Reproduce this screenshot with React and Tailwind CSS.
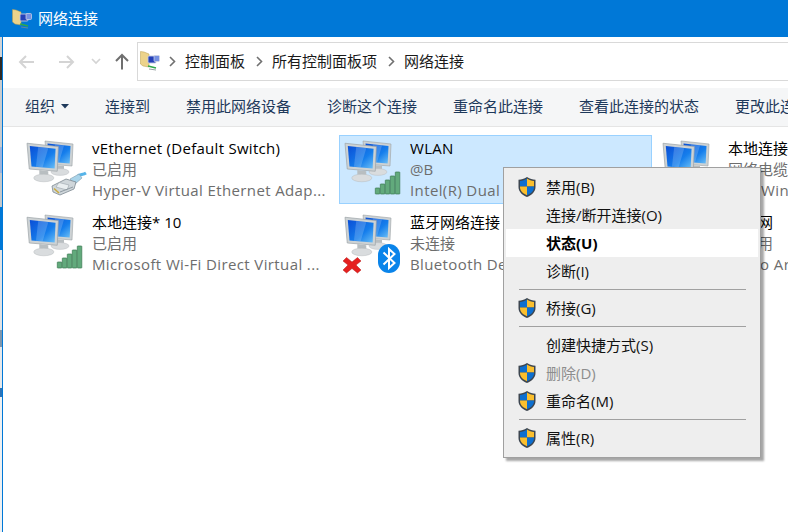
import React from "react";

const font = { fontFamily: '"Open Sans", "Noto Sans CJK SC", sans-serif' };

function Mon({ x, y, s = 1, id }) {
  return (
    <g transform={`translate(${x} ${y}) scale(${s})`}>
      <path d="M0 2 L28 5 L27 27 L2 25 Z" fill="#cdd2d4" stroke="#9aa1a5" strokeWidth="0.6" />
      <path d="M2.5 4.5 L25.5 7 L24.7 24.5 L4 22.8 Z" fill={`url(#${id})`} />
      <path d="M10 5.4 L19 6.4 L14 23.4 L8 23 Z" fill="#ffffff" opacity="0.18" />
      <path d="M11 26 L19 27 L19 31 L11 30 Z" fill="#b8bec1" />
      <ellipse cx="15" cy="33" rx="9" ry="3.4" fill="#d9dcde" stroke="#b2b7ba" strokeWidth="0.4" />
    </g>
  );
}

function Monitors({ id }) {
  return (
    <>
      <defs>
        <linearGradient id={id} x1="0" y1="0" x2="1" y2="1">
          <stop offset="0" stopColor="#0a4ed6" />
          <stop offset="0.6" stopColor="#157eec" />
          <stop offset="1" stopColor="#6cbff6" />
        </linearGradient>
      </defs>
      <Mon x={19} y={0} s={1} id={id} />
      <Mon x={1} y={2} s={1.12} id={id} />
    </>
  );
}

function Signal() {
  const bars = [[31, 6], [36, 10], [41, 14], [46, 18], [51, 22]];
  return (
    <g>
      {bars.map(([bx, h]) => (
        <rect key={bx} x={bx + 0.3} y={55 - h} width="4.5" height={h} rx="0.5" fill="#62aa7c" stroke="#3b7a52" strokeWidth="0.7" />
      ))}
    </g>
  );
}

function Plug() {
  return (
    <g>
      <path d="M52 37 C54 35 57 36 60 34" stroke="#56b4e9" strokeWidth="3" fill="none" />
      <path d="M44 40 L53 35 L56 39 L49 45 Z" fill="#a9d4ea" stroke="#7f9aab" strokeWidth="0.6" />
      <path d="M26 47 L40 40 L50 43 L48 50 L34 56 L27 53 Z" fill="#cfd6da" stroke="#7c8891" strokeWidth="0.8" />
      <path d="M33 43.5 L43 46 L41 51 L30 48 Z" fill="#e9eef0" stroke="#8c979f" strokeWidth="0.5" />
      <path d="M28 49.5 L33 54" stroke="#c8a93f" strokeWidth="1.6" />
      <path d="M34 53 L47 48" stroke="#8f9aa2" strokeWidth="1" />
    </g>
  );
}

function NetIcon({ type, id }) {
  return (
    <svg width="60" height="62" viewBox="0 0 60 62" className="block overflow-visible">
      <Monitors id={id} />
      {type === "plug" && <Plug />}
      {type === "signal" && <Signal />}
      {type === "bt" && (
        <>
          <path d="M-1 48 L2.5 44.5 L8 49 L13.5 44.5 L17 48 L12 52 L17 57 L13.5 60 L8 55.5 L2.5 60 L-1 57 L4 52 Z" fill="#e5201f" stroke="#b51616" strokeWidth="0.5" />
          <rect x="34" y="31" width="22" height="29" rx="11" fill="#0a84ea" />
          <path d="M39.5 39.5 L50.5 50 L45 55 L45 36 L50.5 41 L39.5 51.5" fill="none" stroke="#fff" strokeWidth="2" />
        </>
      )}
    </svg>
  );
}

function Shield() {
  return (
    <svg width="20" height="22" viewBox="0 0 20 22" className="block">
      <path d="M10 1 C7 3 4.5 3.6 1.5 3.8 L1.5 11 C1.5 15.5 5 19 10 21 C15 19 18.5 15.5 18.5 11 L18.5 3.8 C15.5 3.6 13 3 10 1 Z" fill="#3d4650" />
      <path d="M10 2.6 L10 10.6 L3 10.6 L3 5.1 C5.6 4.8 7.8 4.2 10 2.6 Z" fill="#0d6fd0" />
      <path d="M10 2.6 C12.2 4.2 14.4 4.8 17 5.1 L17 10.6 L10 10.6 Z" fill="#fbbf2d" />
      <path d="M3 10.6 L10 10.6 L10 19.3 C6 17.6 3 15 3 11 Z" fill="#fbbf2d" />
      <path d="M17 10.6 L10 10.6 L10 19.3 C14 17.6 17 15 17 11 Z" fill="#0d6fd0" />
    </svg>
  );
}

function CpIcon() {
  return (
    <svg width="20" height="20" viewBox="0 0 20 20" className="block shrink-0">
      <path d="M0.5 0.5 L4 1 L9 3 L9 16 L3 15 L0.5 13 Z" fill="#ecd38b" stroke="#b99c4a" strokeWidth="0.5" />
      <rect x="8" y="5" width="8" height="7" rx="1" fill="#2440b8" stroke="#c5cbe0" strokeWidth="0.9" />
      <rect x="14" y="4.5" width="5.5" height="6" rx="1" fill="#7590e2" stroke="#d5d8e4" strokeWidth="0.7" />
      <path d="M8 15 L16 17" stroke="#2fa84a" strokeWidth="1.8" />
      <path d="M9 18 L16 19" stroke="#7f8a8e" strokeWidth="0.8" />
    </svg>
  );
}

function Conn({ type, name, status, dev, selected, id, latinName }) {
  return (
    <div className={`flex w-[313px] h-[69px] shrink-0 border ${selected ? "bg-[#cce8ff] border-[#99d1ff]" : "border-transparent"}`}>
      <div className="w-[70px] shrink-0 pl-[4px] pt-[3px]">
        <NetIcon type={type} id={id} />
      </div>
      <div className="flex flex-col min-w-0 pt-[2px]">
        <div className={`h-[21px] leading-[21px] text-[15px] text-black whitespace-nowrap ${latinName ? "tracking-[0.28px]" : ""}`}>{name}</div>
        <div className="h-[21px] leading-[21px] text-[15px] text-[#6d6d6d] whitespace-nowrap">{status}</div>
        <div className="h-[21px] leading-[21px] text-[15px] text-[#6d6d6d] whitespace-nowrap tracking-[0.38px]">{dev}</div>
      </div>
    </div>
  );
}

function Item({ label, bold, disabled, shield, highlight }) {
  return (
    <div className={`flex items-center h-[28px] ${highlight ? "bg-white" : ""}`}>
      <div className="w-[40px] shrink-0 flex justify-center pl-[1px]">{shield && <Shield />}</div>
      <span className={`text-[15px] whitespace-nowrap ${bold ? "font-bold text-black" : disabled ? "text-[#8d8d8d]" : "text-[#111]"}`}>{label}</span>
    </div>
  );
}

const Sep = () => <div className="h-[9px] flex items-center pl-[13px] pr-[12px]"><div className="h-px w-full bg-[#a0a0a0]" /></div>;

function Chev({ cls }) {
  return (
    <svg className={cls} width="7" height="11" viewBox="0 0 7 11"><path d="M1 1l4.5 4.5L1 10" fill="none" stroke="#707070" strokeWidth="1.6" /></svg>
  );
}

export default function App() {
  return (
    <div style={font} className="relative w-[788px] h-[532px] overflow-hidden bg-white flex">
      <div className="w-[3px] h-full shrink-0 flex flex-col border-r border-[#0078d7] bg-[#e6e8ea]">
        <div className="h-[37px] shrink-0 bg-[#0078d7]" />
        <div className="h-[20px] shrink-0 bg-[#d2d4d6]" />
        <div className="h-[23px] shrink-0 bg-[#2e2a26]" />
        <div className="h-[67px] shrink-0 bg-[#c9ccce]" />
        <div className="h-[26px] shrink-0 bg-[#9db4dc]" />
        <div className="h-[34px] shrink-0 bg-[#c4c8cb]" />
        <div className="h-[43px] shrink-0 bg-[#0078d7]" />
        <div className="h-[80px] shrink-0 bg-[#e0e2e4]" />
        <div className="h-[17px] shrink-0 bg-[#7f97ad]" />
        <div className="h-[41px] shrink-0 bg-[#e6e8ea]" />
        <div className="h-[9px] shrink-0 bg-[#2c74b8]" />
        <div className="grow bg-[#eef0f1]" />
      </div>
      <div className="grow min-w-0 flex flex-col">
        <div className="h-[37px] shrink-0 -ml-[3px] pl-[12px] bg-[#0078d7] flex items-center gap-[6px] text-white text-[15px]">
          <CpIcon />
          <span className="whitespace-nowrap">网络连接</span>
        </div>
        <div className="h-[51px] shrink-0 flex items-center bg-white">
          <div className="w-[134px] shrink-0 flex items-center pl-[15px] mb-[2px]">
            <svg width="17" height="14" viewBox="0 0 17 14"><path d="M16 7H2M8 1 2 7l6 6" fill="none" stroke="#d4d4d4" strokeWidth="2" /></svg>
            <svg className="ml-[23px]" width="17" height="14" viewBox="0 0 17 14"><path d="M1 7h14M9 1l6 6-6 6" fill="none" stroke="#d4d4d4" strokeWidth="2" /></svg>
            <svg className="ml-[16px]" width="10" height="7" viewBox="0 0 10 7"><path d="M1 1l4 4 4-4" fill="none" stroke="#d4d4d4" strokeWidth="1.7" /></svg>
            <svg className="ml-[14px]" width="14" height="17" viewBox="0 0 14 17"><path d="M7 16.5V2M1 8 7 2l6 6" fill="none" stroke="#6f6f6f" strokeWidth="2" /></svg>
          </div>
          <div className="h-[39px] grow -mr-[2px] mb-[3px] border border-[#d9d9d9] border-r-0 flex items-center pl-[2px] text-[15px] text-[#1a1a1a] whitespace-nowrap">
            <CpIcon />
            <Chev cls="ml-[9px] shrink-0" />
            <span className="ml-[9px]">控制面板</span>
            <Chev cls="ml-[11px] shrink-0" />
            <span className="ml-[9px]">所有控制面板项</span>
            <Chev cls="ml-[11px] shrink-0" />
            <span className="ml-[9px]">网络连接</span>
          </div>
        </div>
        <div className="h-[39px] shrink-0 pb-[2px] bg-[#f5f6f7] border-b border-[#e5e5e5] flex items-center text-[15px] text-[#1e395b] whitespace-nowrap">
          <span className="ml-[22px]">组织</span>
          <svg className="ml-[6px] shrink-0" width="8" height="5" viewBox="0 0 8 5"><path d="M0 0h8L4 4.5z" fill="#1e395b" /></svg>
          <span className="ml-[36px]">连接到</span>
          <span className="ml-[36px]">禁用此网络设备</span>
          <span className="ml-[36px]">诊断这个连接</span>
          <span className="ml-[36px]">重命名此连接</span>
          <span className="ml-[36px]">查看此连接的状态</span>
          <span className="ml-[36px]">更改此连接的设置</span>
        </div>
        <div className="grow min-h-0 pl-[18px] pt-[8px] flex gap-[5px] overflow-hidden">
          <div className="flex flex-col gap-[5px] shrink-0">
            <Conn id="a1" latinName type="plug" name="vEthernet (Default Switch)" status="已启用" dev="Hyper-V Virtual Ethernet Adap..." />
            <Conn id="a2" type="signal" name="本地连接* 10" status="已启用" dev="Microsoft Wi-Fi Direct Virtual ..." />
          </div>
          <div className="flex flex-col gap-[5px] shrink-0">
            <Conn id="b1" latinName selected type="signal" name="WLAN" status="@B" dev="Intel(R) Dual" />
            <Conn id="b2" type="bt" name="蓝牙网络连接" status="未连接" dev="Bluetooth De" />
          </div>
          <div className="flex flex-col gap-[5px] shrink-0">
            <Conn id="c1" type="none" name="本地连接" status="网络电缆" dev="TAP-Win" />
            <Conn id="c2" type="none" name="以太网" status="已启用" dev="Micro Ar" />
          </div>
        </div>
      </div>
      <div className="absolute left-[503px] top-[167px] w-[258px] h-[291px] bg-[#eeeeee] border border-[#a0a0a0] shadow-[3px_3px_2px_rgba(0,0,0,0.35)] px-[2px] py-[5px] flex flex-col">
        <Item shield label="禁用(B)" />
        <Item label="连接/断开连接(O)" />
        <Item bold highlight label="状态(U)" />
        <Item label="诊断(I)" />
        <Sep />
        <Item shield label="桥接(G)" />
        <Sep />
        <Item label="创建快捷方式(S)" />
        <Item shield disabled label="删除(D)" />
        <Item shield label="重命名(M)" />
        <Sep />
        <Item shield label="属性(R)" />
      </div>
    </div>
  );
}
